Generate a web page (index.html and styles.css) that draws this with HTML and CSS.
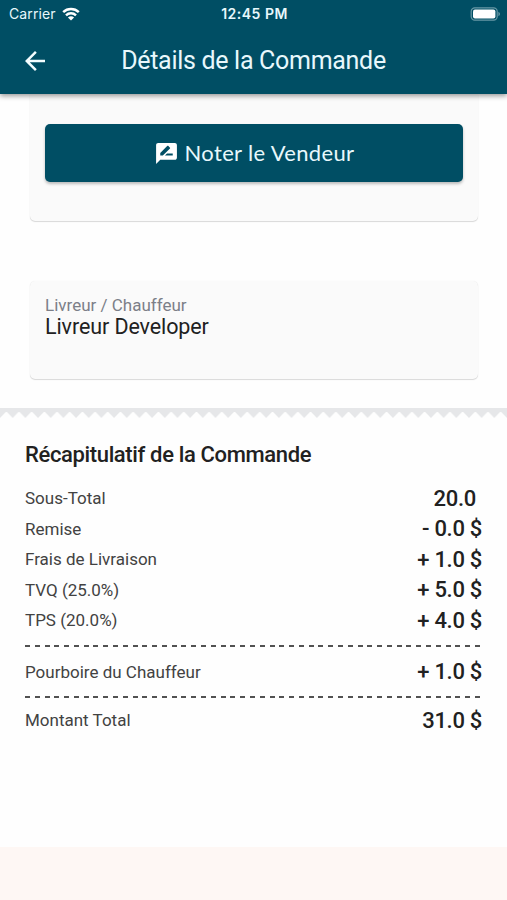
FILE: index.html
```
<!DOCTYPE html>
<html lang="fr">
<head>
    <meta charset="UTF-8">
    <title>Détails de la Commande</title>
    <link rel="stylesheet" href="styles.css">
</head>
<body>

    <header class="topbar">
        <div class="status">
            <div class="carrier">
                <span>Carrier</span>
                <svg class="wifi" viewBox="0 0 18 14">
                    <path d="M1.2 5.2a11.4 11.4 0 0 1 15.6 0M4 8.3a7.3 7.3 0 0 1 10 0" />
                    <path class="dot" d="M9 13.6L5.9 10.6a4.5 4.5 0 0 1 6.2 0z" />
                </svg>
            </div>
            <span class="time">12:45 PM</span>
            <svg class="battery" viewBox="0 0 30 14">
                <rect class="shell" x="1.2" y="0.8" width="26" height="12.4" rx="3.6" />
                <rect class="level" x="3" y="2.5" width="22.4" height="9" rx="2" />
                <path class="tip" d="M28.4 4.8q1.600 0.8 1.600 2.2t-1.600 2.2z" />
            </svg>
        </div>
        <div class="appbar">
            <svg class="back" viewBox="0 0 24 24">
                <path d="M20 11H7.83l5.59-5.59L12 4l-8 8 8 8 1.41-1.41L7.83 13H20v-2z" />
            </svg>
            <h1>Détails de la Commande</h1>
        </div>
    </header>

    <main>
        <section class="card vendor">
            <button type="button">
                <svg viewBox="0 0 24 24">
                    <path d="M20 2H4c-1.100 0-1.990.9-1.990 2L2 22l4-4h14c1.100 0 2-.9 2-2V4c0-1.100-.9-2-2-2zM6 14v-2.470l6.880-6.880c.2-.2.510-.2.710 0l1.770 1.770c.2.2.2.510 0 .710L8.470 14H6zm12 0h-7.500l2-2H18v2z" />
                </svg>
                <span>Noter le Vendeur</span>
            </button>
        </section>

        <section class="card driver">
            <p class="label">Livreur / Chauffeur</p>
            <p class="name">Livreur Developer</p>
        </section>

        <svg class="zigzag" viewBox="0 0 507 10">
            <defs>
                <pattern id="tooth" width="12.675" height="10" patternUnits="userSpaceOnUse">
                    <path d="M0 0H12.675V10L6.900 4H5.800L0 10z" />
                </pattern>
            </defs>
            <rect width="507" height="10" fill="url(#tooth)" />
        </svg>

        <section class="summary">
            <h2>Récapitulatif de la Commande</h2>
            <div class="row"><span>Sous-Total</span><b class="subtotal">20.0</b></div>
            <div class="row"><span>Remise</span><b>- 0.0 $</b></div>
            <div class="row"><span>Frais de Livraison</span><b>+ 1.0 $</b></div>
            <div class="row"><span>TVQ (25.0%)</span><b>+ 5.0 $</b></div>
            <div class="row"><span>TPS (20.0%)</span><b>+ 4.0 $</b></div>
            <div class="dashes"></div>
            <div class="row"><span>Pourboire du Chauffeur</span><b>+ 1.0 $</b></div>
            <div class="dashes"></div>
            <div class="row total"><span>Montant Total</span><b>31.0 $</b></div>
        </section>
    </main>

    <footer></footer>

</body>
</html>
```

FILE: styles.css
```
* {
    margin: 0;
    padding: 0;
    box-sizing: border-box;
}
body {
    height: 900px;
    display: flex;
    flex-direction: column;
    overflow: hidden;
    background-color: #fefefe;
    color: #212121;
    font-family: Roboto, sans-serif;
}
svg {
    display: block;
    flex: none;
}
.topbar {
    position: relative;
    height: 94px;
    flex: none;
    background-color: #004e64;
    color: #e8f8fc;
    box-shadow: 0 2px 5px rgba(0, 0, 0, 0.4);
}
.status {
    display: grid;
    grid-template-columns: 1fr auto 1fr;
    align-items: center;
    height: 27px;
    padding: 0 7px 0 9px;
    font-family: Inter, sans-serif;
    font-size: 14px;
}
.carrier {
    display: flex;
    align-items: center;
    gap: 6px;
    letter-spacing: 0.1px;
}
.wifi {
    width: 18px;
    height: 14px;
    fill: none;
    stroke: white;
    stroke-width: 2.5;
}
.wifi .dot {
    fill: white;
    stroke: none;
}
.time {
    font-weight: 600;
    font-size: 14px;
    letter-spacing: 0.5px;
}
.battery {
    width: 30px;
    height: 14px;
    justify-self: end;
}
.shell {
    fill: none;
    stroke: #6798a5;
    stroke-width: 1.2;
}
.level {
    fill: white;
}
.tip {
    fill: #6798a5;
}
.appbar {
    display: grid;
    grid-template-columns: 70px 1fr 70px;
    align-items: center;
    height: 67px;
}
.back {
    width: 30px;
    height: 30px;
    margin-left: 20px;
    fill: #f4fdff;
}
h1 {
    text-align: center;
    font-size: 25px;
    font-weight: 400;
    letter-spacing: -0.3px;
}
main {
    flex: 1;
}
.card {
    margin: 0 29px 0 30px;
    background-color: #fafafa;
    border-radius: 5px;
    box-shadow: 0 1px 1px rgba(0, 0, 0, 0.14), 0 0 1px rgba(0, 0, 0, 0.1);
}
.vendor {
    height: 127px;
    padding: 30px 15px 0;
    border-radius: 0 0 5px 5px;
}
button {
    display: flex;
    align-items: center;
    justify-content: center;
    gap: 6px;
    width: 100%;
    height: 58px;
    border: none;
    border-radius: 5px;
    background-color: #004e64;
    color: #e8f8fc;
    font-family: Lato, sans-serif;
    font-size: 22px;
    letter-spacing: 0.35px;
    box-shadow: 0 2px 3px rgba(0, 0, 0, 0.25);
}
button span {
    padding-bottom: 2px;
}
button svg {
    width: 25px;
    height: 25px;
    fill: white;
}
.driver {
    height: 98px;
    margin-top: 60px;
    padding: 14px 15px;
}
.label {
    color: #7c7f88;
    font-size: 17px;
    line-height: 21px;
}
.name {
    font-size: 21.5px;
    letter-spacing: -0.1px;
    line-height: 22px;
}
.zigzag {
    width: 100%;
    height: 10px;
    margin-top: 29px;
    fill: #e6e7e9;
}
.summary {
    padding: 22px 25px 0;
}
h2 {
    margin-bottom: 13px;
    font-size: 22px;
    font-weight: 500;
    letter-spacing: -0.36px;
    line-height: 30px;
}
.row {
    display: flex;
    align-items: center;
    justify-content: space-between;
    height: 30.5px;
    color: #424242;
    font-size: 17px;
}
.row b {
    color: #212121;
    font-size: 22px;
    font-weight: 500;
    letter-spacing: -0.3px;
}
.row .subtotal {
    padding-right: 6px;
}
.dashes {
    width: 455px;
    height: 2px;
    margin: 9px 0 10px;
    background: repeating-linear-gradient(to right, #515151 0 5px, transparent 5px 9.78px);
}
.total {
    margin-top: -3px;
}
footer {
    height: 53px;
    flex: none;
    background-color: #fef7f4;
}
```
